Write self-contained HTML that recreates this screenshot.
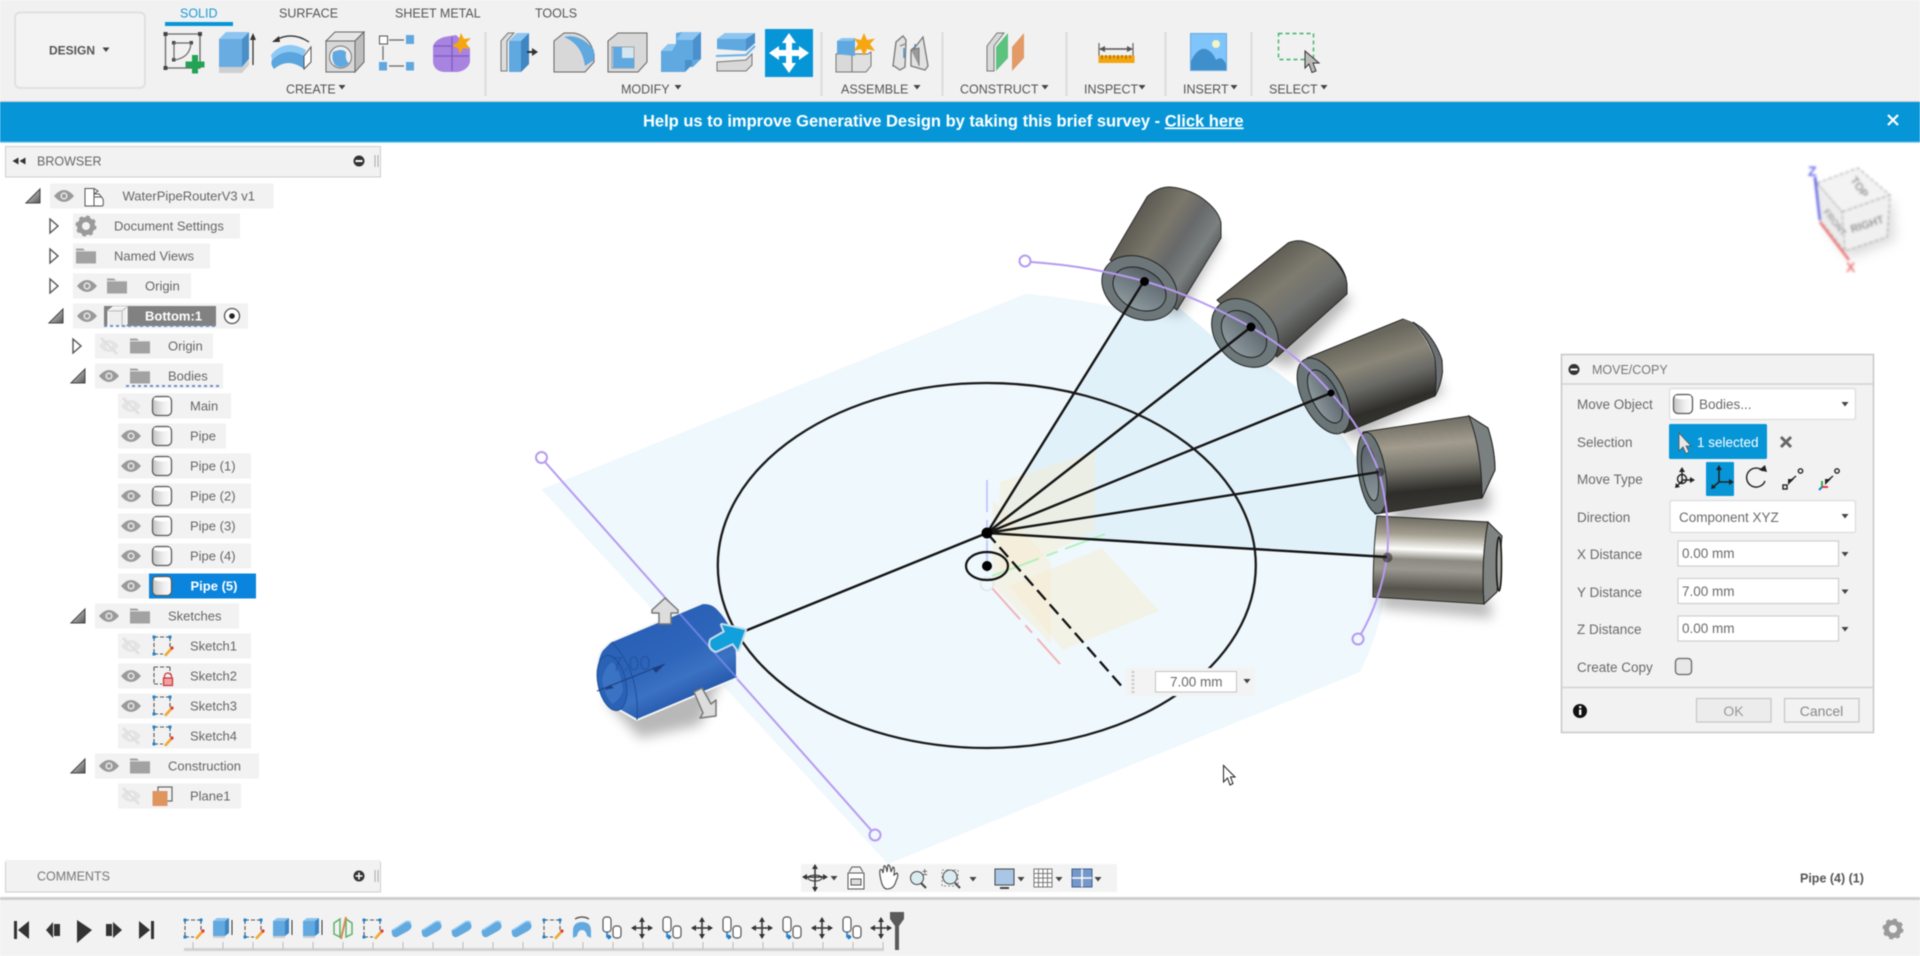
<!DOCTYPE html>
<html><head><meta charset="utf-8"><title>Move/Copy</title>
<style>
html,body{margin:0;padding:0;background:#fff;width:1920px;height:956px;overflow:hidden}
svg{display:block;position:absolute;left:0;top:0;filter:blur(.45px)}
text{font-family:"Liberation Sans",sans-serif}
.tab{font-size:12.5px;fill:#555}
.lbl{font-size:12.5px;fill:#555}
.tr{font-size:13px;fill:#666}
.d{font-size:13.5px;fill:#6a6a6a}
</style></head><body>
<svg width="1920" height="956" viewBox="0 0 1920 956" xmlns="http://www.w3.org/2000/svg">
<defs>
<filter id="bl" x="-30%" y="-30%" width="160%" height="160%"><feGaussianBlur stdDeviation="6"/></filter>
<filter id="b1" x="-10%" y="-10%" width="120%" height="120%"><feGaussianBlur stdDeviation="1"/></filter>
<linearGradient id="tri" x1="0" y1="0" x2="1" y2="1"><stop offset="0" stop-color="#eee"/><stop offset="1" stop-color="#555"/></linearGradient>
<linearGradient id="cg" x1="0" y1="0" x2="1" y2="0"><stop offset="0" stop-color="#c4c4c4"/><stop offset=".6" stop-color="#f0f0f0"/><stop offset="1" stop-color="#fff"/></linearGradient>
<linearGradient id="c1" gradientUnits="userSpaceOnUse" x1="1108" y1="258" x2="1178" y2="305"><stop offset="0" stop-color="#5d5b53"/><stop offset=".35" stop-color="#7b776b"/><stop offset=".6" stop-color="#67696a"/><stop offset=".85" stop-color="#7b8080"/><stop offset="1" stop-color="#5d6060"/></linearGradient>
<linearGradient id="c2" gradientUnits="userSpaceOnUse" x1="1225" y1="290" x2="1280" y2="360"><stop offset="0" stop-color="#5e5c54"/><stop offset=".35" stop-color="#7e7b6f"/><stop offset=".65" stop-color="#6f7170"/><stop offset=".9" stop-color="#4a4b48"/><stop offset="1" stop-color="#3e3e3a"/></linearGradient>
<linearGradient id="c3" gradientUnits="userSpaceOnUse" x1="1360" y1="340" x2="1385" y2="420"><stop offset="0" stop-color="#6a685e"/><stop offset=".3" stop-color="#8a8678"/><stop offset=".55" stop-color="#6a6a66"/><stop offset=".85" stop-color="#2f2e2a"/><stop offset="1" stop-color="#353530"/></linearGradient>
<linearGradient id="c4" gradientUnits="userSpaceOnUse" x1="1420" y1="420" x2="1428" y2="510"><stop offset="0" stop-color="#6e6c62"/><stop offset=".28" stop-color="#a29c8e"/><stop offset=".5" stop-color="#7d7b72"/><stop offset=".78" stop-color="#2e2d29"/><stop offset="1" stop-color="#3a3934"/></linearGradient>
<linearGradient id="c5" gradientUnits="userSpaceOnUse" x1="1430" y1="518" x2="1427" y2="602"><stop offset="0" stop-color="#6e6c61"/><stop offset=".2" stop-color="#a39e90"/><stop offset=".38" stop-color="#fdfdfa"/><stop offset=".5" stop-color="#8c8a82"/><stop offset=".62" stop-color="#9a9890"/><stop offset=".85" stop-color="#55544c"/><stop offset="1" stop-color="#6c6b62"/></linearGradient>
<linearGradient id="hole" x1="0" y1="0" x2="0" y2="1"><stop offset="0" stop-color="#59626a"/><stop offset="1" stop-color="#8b989c"/></linearGradient>
<linearGradient id="blc" gradientUnits="userSpaceOnUse" x1="640" y1="620" x2="680" y2="705"><stop offset="0" stop-color="#2960b6"/><stop offset=".5" stop-color="#2e66bb"/><stop offset=".75" stop-color="#3c72c2"/><stop offset="1" stop-color="#2458ac"/></linearGradient>
<g id="eye"><path d="M-10 0Q0-12 10 0Q0 12-10 0Z" fill="#9a9a9a"/><circle r="3.6" fill="#e8e8e8"/><circle r="2.1" fill="#9a9a9a"/></g>
<g id="eyeoff"><path d="M-10 0Q0-12 10 0Q0 12-10 0Z" fill="#e4e4e4"/><circle r="3" fill="#f6f6f6"/><path d="M-8-8L8 8" stroke="#e0e0e0" stroke-width="2.5"/></g>
<g id="fold"><path d="M-10-7.5h7l2 2h11v13h-20z" fill="#a2a2a2"/><path d="M-10-5h20" stroke="#e4e4e4" stroke-width="1"/></g>
<g id="td"><path d="M-7 7L7-7V7Z" fill="url(#tri)" stroke="#444" stroke-width="1"/></g>
<g id="tr"><path d="M-4-7L4 0L-4 7Z" fill="#fff" stroke="#555" stroke-width="1.4"/></g>
<g id="cyl"><rect x="-9.500" y="-9.500" width="19" height="19" rx="4.500" fill="url(#cg)" stroke="#5a5a5a" stroke-width="1.3"/><path d="M-8-6Q0-3 8-6V-8.500H-8Z" fill="#fff"/></g>
<g id="sk"><path d="M-8-9H8M-8-9V8M8-9V5M-8 8H1" fill="none" stroke="#555" stroke-width="1.1" stroke-dasharray="4 2"/><g fill="#1c86d8"><rect x="-9.500" y="-10.500" width="3" height="3"/><rect x="6.500" y="-10.500" width="3" height="3"/><rect x="-9.500" y="6.500" width="3" height="3"/></g><path d="M2 9L9 1L11 3L4 10.500Z" fill="#f0a830"/><circle cx="10" cy="2" r="1.600" fill="#e53935"/></g>
<g id="skl"><path d="M-8-9H8M-8-9V8M8-9V-1M-8 8H0" fill="none" stroke="#555" stroke-width="1.1" stroke-dasharray="4 2"/><path d="M2.500 1.500V0a3.500 3 0 0 1 7 0v1.500" fill="none" stroke="#c8323a" stroke-width="1.2"/><rect x="1.500" y="2" width="9" height="7.500" fill="#f0a0a0" stroke="#c8323a" stroke-width="1.2"/></g>
<g id="gear"><circle r="6.500" fill="none" stroke="#9a9a9a" stroke-width="5"/><circle r="9" fill="none" stroke="#9a9a9a" stroke-width="3" stroke-dasharray="3.530 3.530"/></g>
<path id="car" d="M-3.500-2h7L0 2.500Z" fill="#444"/>
<g id="tE"><path d="M-9-7H3V8H-9Z" fill="#62a9e0"/><path d="M3-7L7-10H-5L-9-7Z" fill="#8cc4ee"/><path d="M3-7L7-10V5L3 8Z" fill="#3f86c2"/><path d="M-9 8H3V10H-9Z" fill="#cfcfcf"/><path d="M10 7V-8" stroke="#333" stroke-width="1"/></g>
<g id="tL"><path d="M-9 1L3-6Q7-8 9-4T6 3L-5 9Q-9 10-10 6T-9 1Z" fill="#62a9e0"/><path d="M-9 2L3-6Q7-8 9-5" fill="none" stroke="#9bd0f5" stroke-width="1.500"/></g>
<g id="tP"><path d="M-9-5L-3-9V9L-9 6Z" fill="none" stroke="#5ab26c" stroke-width="1.500"/><path d="M3-9L9-5V6L3 9Z" fill="none" stroke="#5ab26c" stroke-width="1.500"/><path d="M-2 11L3-11" stroke="#d88a50" stroke-width="2"/></g>
<g id="tR"><path d="M-9 3Q-9-6 0-6T9 3V10L5 8Q4 2 0 2T-5 8L-9 10Z" fill="#62a9e0"/><path d="M-7-9Q0-13 7-9" fill="none" stroke="#444" stroke-width="1.2"/></g>
<g id="tC"><rect x="-9" y="-11" width="8" height="15" rx="3" fill="#fff" stroke="#555" stroke-width="1.2"/><rect x="1" y="-2" width="8" height="12" rx="3" fill="#fff" stroke="#555" stroke-width="1.2"/><path d="M-5 4V9H-1M-1 9L-4 7M-1 9L-4 11" fill="none" stroke="#1a78c8" stroke-width="1.500"/></g>
<g id="tM"><path d="M0-10V10M-10 0H10" stroke="#333" stroke-width="1.600"/><path d="M0-11L-3-6H3ZM0 11L-3 6H3ZM-11 0L-6-3V3ZM11 0L6-3V3Z" fill="#333"/></g>
</defs>

<!-- ===== VIEWPORT ===== -->
<rect width="1920" height="956" fill="#fff"/>
<path d="M541.500 489.500L1025 294C1100 300 1160 316 1210 337C1265 362 1310 393 1340 433C1372 478 1387 525 1387 566C1386 605 1376 640 1360 672L888 864Z" fill="#eff8fd"/>
<path d="M987 533L1145 283C1170 298 1195 322 1215 338C1270 362 1310 393 1340 433C1368 470 1384 515 1387 558Z" fill="#e1f1fa"/>
<!-- planes -->
<g fill="#f7e9c9" fill-opacity=".42">
<path d="M1000 482L1095 451V531L1000 577Z"/><path d="M993 500L1051 562V644L993 585Z"/><path d="M1009 586L1102 548L1159 611L1063 650Z"/>
</g>
<!-- axes -->
<path d="M987 480V575" stroke="#c9c9fb" stroke-width="2" stroke-dasharray="32 8 12 8"/>
<path d="M992 576L1105 534" stroke="#b4efbc" stroke-width="2" stroke-dasharray="50 8 12 8 80"/>
<path d="M992 588L1060 664" stroke="#f2b4b4" stroke-width="2" stroke-dasharray="42 8 10 8 40"/>
<circle cx="987" cy="584" r="6.500" fill="none" stroke="#e4e4e4" stroke-width="1.500"/>
<ellipse cx="986.800" cy="565.500" rx="269" ry="182.500" fill="none" stroke="#1a1a1a" stroke-width="2.300"/>
<ellipse cx="987" cy="566" rx="21" ry="14" fill="none" stroke="#111" stroke-width="2.200"/>
<circle cx="987" cy="566" r="5" fill="#000"/>
<path d="M987 533L1125 690" stroke="#111" stroke-width="2.300" stroke-dasharray="13 6"/>

<!-- shadows -->
<g fill="#000" fill-opacity=".28" filter="url(#bl)">
<path d="M1175 220L1222 240L1180 316L1130 300Z"/>
<path d="M1300 262L1352 300L1290 368L1240 350Z"/>
<path d="M1420 350L1444 392L1352 442L1335 410Z"/>
<path d="M1400 500L1490 486L1490 510L1385 526Z"/>
<path d="M1380 590L1490 600L1492 618L1380 608Z"/>
<path d="M605 700L730 660L700 725L640 738Z"/>
</g>

<!-- cylinder 1 -->
<path d="M1110 260L1147 197Q1157 187 1170 187Q1192 189 1207 202Q1219 212 1221 223L1221 238L1177 310Z" fill="url(#c1)" stroke="#2a2a28" stroke-width="1"/>
<ellipse cx="1139.500" cy="288" rx="39.500" ry="30" transform="rotate(28 1139.500 288)" fill="#6d7779" stroke="#222" stroke-width="1"/>
<ellipse cx="1139.500" cy="289" rx="28" ry="20" transform="rotate(28 1139.500 289)" fill="url(#hole)" stroke="#222" stroke-width="1"/>
<!-- cylinder 2 -->
<path d="M1217 300L1288 243Q1295 240 1302 241Q1318 245 1331 256Q1345 268 1347 284L1347 294L1277 357Z" fill="url(#c2)" stroke="#2a2a28" stroke-width="1"/>
<path d="M1322 249Q1340 260 1346 278Q1336 258 1322 249Z" fill="#333" stroke="#222" stroke-width="1"/>
<ellipse cx="1245" cy="333" rx="38" ry="29" transform="rotate(48 1245 333)" fill="#6d787b" stroke="#222" stroke-width="1"/>
<ellipse cx="1244" cy="334" rx="26.500" ry="19" transform="rotate(48 1244 334)" fill="url(#hole)" stroke="#222" stroke-width="1"/>
<!-- cylinder 3 -->
<path d="M1307 358L1403 319L1413 323L1435 396L1344 433Z" fill="url(#c3)" stroke="#2a2a28" stroke-width="1"/>
<path d="M1403 319L1413 323Q1433 345 1437 372Q1437 385 1435 396Z" fill="url(#c3)"/>
<path d="M1413 322Q1430 340 1435 360Q1437 380 1435 396Q1441 385 1442.500 372L1442 360Q1436 341 1422 328Z" fill="#6d7072" stroke="#222" stroke-width="1"/>
<ellipse cx="1323.500" cy="396" rx="41" ry="21" transform="rotate(63 1323.500 396)" fill="#6a7578" stroke="#222" stroke-width="1"/>
<ellipse cx="1325" cy="396.500" rx="29" ry="13" transform="rotate(63 1325 396.500)" fill="url(#hole)" stroke="#222" stroke-width="1"/>
<!-- cylinder 4 -->
<path d="M1363 432L1469 416L1488 428Q1495 450 1495 470L1482 498L1375 514Q1362 490 1359 470Q1359 445 1363 432Z" fill="url(#c4)" stroke="#2a2a28" stroke-width="1"/>
<path d="M1469 416Q1482 450 1482 498L1495 470Q1495 450 1488 428Z" fill="#7a7f7f" stroke="#222" stroke-width="1"/>
<ellipse cx="1372" cy="473" rx="13.500" ry="41" transform="rotate(-9 1372 473)" fill="#6b7577" stroke="#222" stroke-width="1"/>
<ellipse cx="1370" cy="473" rx="7.500" ry="28" transform="rotate(-9 1370 473)" fill="url(#hole)" stroke="#222" stroke-width="1"/>
<!-- cylinder 5 -->
<path d="M1377 516L1488 522Q1481 560 1484 604L1373 597Q1373 550 1377 516Z" fill="url(#c5)" stroke="#2a2a28" stroke-width="1"/>
<path d="M1488 522L1502 536L1497 592L1484 604Q1481 560 1488 522Z" fill="#7f8382" stroke="#222" stroke-width="1"/>
<ellipse cx="1499" cy="564" rx="2.500" ry="27" fill="#a8a8a2" stroke="#1a1a1a" stroke-width="1.600"/>

<!-- purple -->
<g fill="none" stroke="#b79af0" stroke-width="2">
<path d="M1031 262C1075 265 1110 272 1144 281C1185 293 1220 310 1251 327C1285 347 1310 368 1331 393C1355 420 1370 447 1379 472C1386 497 1390 530 1387 557C1382 590 1372 615 1361 634"/>
<circle cx="1025" cy="261" r="5.500"/><circle cx="1358" cy="639" r="5.500"/>
<path d="M545 462L871 830"/>
<circle cx="541.500" cy="457.500" r="5.500"/><circle cx="875" cy="835" r="5.500"/>
</g>
<!-- black lines -->
<g stroke="#151515" stroke-width="2.400">
<path d="M987 533L1144 281M987 533L1251 327M987 533L1331 393M987 533L1379 472M987 533L1387 557M987 533L745 631"/>
</g>
<circle cx="1144.500" cy="281.500" r="4.500" fill="#000"/><circle cx="1251" cy="327" r="4.500" fill="#000"/><circle cx="1331" cy="393" r="3.500" fill="#000"/>
<circle cx="1380" cy="472" r="4.500" fill="#222" fill-opacity=".55"/><circle cx="1387.500" cy="557.500" r="5" fill="#222" fill-opacity=".55"/>
<circle cx="987" cy="533" r="5.500" fill="#000"/>

<!-- blue selected cylinder -->
<path d="M610 642L703 603Q712 603 717 608Q727 618 732 630Q737 645 737 657V678L637 720L623 712Q608 704 602 693Q596 682 597 670Q597 658 602 650Z" fill="url(#blc)" stroke="#f4f4f4" stroke-width="2"/>
<path d="M612 642Q640 672 637 720" fill="none" stroke="#1f4f98" stroke-width="1"/>
<ellipse cx="612" cy="683" rx="14" ry="28" transform="rotate(-12 612 683)" fill="#2a62b6" stroke="#1f4f98" stroke-width="1"/>
<path d="M602 680Q604 668 612 662Q620 668 623 690Q620 700 612 704Q604 694 602 680Z" fill="#3a72c4"/>
<path d="M597 691L665 664" stroke="#1d3f80" stroke-width="1"/>
<path d="M652 668L665 664L656 673ZM610 685L604 690L614 688Z" fill="#1d3f80"/>
<text x="612" y="671" font-size="20" fill="#1c3f80" fill-opacity=".35" transform="rotate(-2 612 671)">7.00</text>
<path d="M680 614L737 678" stroke="#7d8cf0" stroke-width="2" opacity=".75"/>
<!-- arrows -->
<path d="M665 598L678 610V613H671V624H659V613H652V610Z" fill="#ddd" stroke="#777" stroke-width="1.500" stroke-linejoin="round"/>
<path d="M694 692L702 688L711 704L716 700V716L700 718L703 713Z" fill="#ddd" stroke="#777" stroke-width="1.500" stroke-linejoin="round"/>
<path d="M711 640L725 632L722 625L745 630L738 650L733 643L716 651Q708 648 711 640Z" fill="#12a0dc" stroke="#c9dce8" stroke-width="4" paint-order="stroke" stroke-linejoin="round"/>

<!-- dimension widget -->
<rect x="1125" y="668" width="130" height="28" fill="#f3f3f3"/>
<path d="M1133 671V694" stroke="#ccc" stroke-width="3" stroke-dasharray="2 2"/>
<rect x="1155.500" y="671.500" width="81" height="20.500" fill="#fff" stroke="#c4c4c4"/>
<text x="1170" y="686.500" class="d">7.00 mm</text>
<use href="#car" x="1247" y="681"/>
<!-- mouse cursor -->
<path d="M1223.500 765.500V782L1227.500 778L1230 785L1233 783.500L1230.500 777H1235Z" fill="#fff" stroke="#222" stroke-width="1"/>

<!-- ViewCube -->
<path d="M1825 225L1850 258L1895 240L1892 200Z" fill="#000" fill-opacity=".14" filter="url(#bl)"/>
<g filter="url(#b1)">
<path d="M1817 183L1858 168L1890 195L1842 212Z" fill="#f3f3f3" stroke="#999" stroke-dasharray="4 2"/>
<path d="M1842 212L1890 195L1887 237L1845 251Z" fill="#f0f0f0" stroke="#999" stroke-dasharray="4 2"/>
<path d="M1817 183L1842 212L1845 251L1820 220Z" fill="#ececec" stroke="#aaa" stroke-dasharray="4 2"/>
<text x="0" y="0" font-size="11" font-weight="bold" fill="#888" transform="translate(1850 180) rotate(55)">TOP</text>
<text x="0" y="0" font-size="11" font-weight="bold" fill="#888" transform="translate(1852 233) rotate(-18)">RIGHT</text>
<text x="0" y="0" font-size="9" font-weight="bold" fill="#999" transform="translate(1823 212) rotate(52)">FRONT</text>
<path d="M1815 177L1820 220" stroke="#5a5ae6" stroke-width="2.500"/>
<path d="M1820 222L1849 260" stroke="#ee7070" stroke-width="2.500"/>
<text x="1808" y="176" font-size="14" font-weight="bold" fill="#6a6af0">Z</text>
<text x="1846" y="272" font-size="14" font-weight="bold" fill="#f07878">X</text>
</g>

<!-- ===== TOOLBAR ===== -->
<rect width="1920" height="101" fill="#f1f1f1"/>
<rect y="101" width="1920" height="1" fill="#cfcfcf"/>
<rect y="102" width="1920" height="39.500" fill="#0696d7"/>
<rect y="141.500" width="1920" height="1.200" fill="#62bfe8"/>
<text x="643" y="126.500" font-size="16.500" font-weight="bold" fill="#fff">Help us to improve Generative Design by taking this brief survey - <tspan text-decoration="underline">Click here</tspan></text>
<path d="M1888 115L1898 125M1898 115L1888 125" stroke="#fff" stroke-width="2.200"/>

<rect x="15" y="12.500" width="130" height="75.500" rx="5" fill="#f3f3f3" stroke="#e0e0e0" stroke-width="2"/>
<text x="49" y="54.500" font-size="12" font-weight="bold" fill="#555">DESIGN</text>
<use href="#car" x="106" y="49.500"/>
<text x="180" y="17.500" class="tab" style="fill:#1a9ad8">SOLID</text>
<rect x="165" y="22" width="68" height="4" fill="#0696d7"/>
<text x="279" y="17.500" class="tab">SURFACE</text>
<text x="395" y="17.500" class="tab">SHEET METAL</text>
<text x="535" y="17.500" class="tab">TOOLS</text>

<!-- separators -->
<g fill="#dcdcdc"><rect x="484.500" y="32" width="2" height="64"/><rect x="820.500" y="32" width="2" height="64"/><rect x="941.500" y="32" width="2" height="64"/><rect x="1065.500" y="32" width="2" height="64"/><rect x="1164.500" y="32" width="2" height="64"/><rect x="1250.500" y="32" width="2" height="64"/></g>

<!-- labels -->
<text x="286" y="93.500" class="lbl">CREATE</text><use href="#car" x="342" y="87"/>
<text x="621" y="93.500" class="lbl">MODIFY</text><use href="#car" x="678" y="87"/>
<text x="841" y="93.500" class="lbl">ASSEMBLE</text><use href="#car" x="917" y="87"/>
<text x="960" y="93.500" class="lbl">CONSTRUCT</text><use href="#car" x="1045" y="87"/>
<text x="1084" y="93.500" class="lbl">INSPECT</text><use href="#car" x="1142" y="87"/>
<text x="1183" y="93.500" class="lbl">INSERT</text><use href="#car" x="1234" y="87"/>
<text x="1269" y="93.500" class="lbl">SELECT</text><use href="#car" x="1324" y="87"/>

<!-- sketch -->
<path d="M165.500 34H200V68H165.500Z" fill="none" stroke="#666" stroke-width="1.300"/>
<g fill="#444"><rect x="163.500" y="32" width="4" height="4"/><rect x="198" y="32" width="4" height="4"/><rect x="163.500" y="66" width="4" height="4"/><rect x="172" y="41" width="3.500" height="3.500"/><rect x="189.500" y="41" width="3.500" height="3.500"/><rect x="172" y="58" width="3.500" height="3.500"/></g>
<path d="M174 43V60M174 43H191M191 43Q190 58 174 60" fill="none" stroke="#666" stroke-width="1.200"/>
<path d="M192 55h6v6.500h6.500v6h-6.500v6h-6v-6h-6.500v-6h6.500z" fill="#23a455"/>
<!-- extrude -->
<path d="M219 67h23l7-7v5l-7 8h-23z" fill="#cfcfcf"/><path d="M219 39H242V67H219Z" fill="#69ace2"/><path d="M242 39L249 32V59L242 67Z" fill="#4a8fc8"/><path d="M219 39L226 32H249L242 39Z" fill="#8cc5ef"/>
<path d="M253 65V37" stroke="#333" stroke-width="1.300"/><path d="M253 33L250 40H256Z" fill="#333"/>
<!-- revolve -->
<path d="M271 55Q285 38 306 50L304 56Q286 46 272 60Z" fill="#8cc9f5"/>
<path d="M272 60Q286 46 304 56V69Q288 57 274 69Q270 64 272 60Z" fill="#5aa5de"/>
<path d="M304 56L311 47V62L304 69Z" fill="#fff" stroke="#555"/>
<path d="M276 40Q292 31 309 42" fill="none" stroke="#333" stroke-width="1.300"/><path d="M272 42L279 36L280 42Z" fill="#333"/>
<!-- hole -->
<path d="M326 41H355V72H326Z" fill="#d8d8d8" stroke="#666"/><path d="M326 41L335 32H364L355 41Z" fill="#e6e6e6" stroke="#666"/><path d="M355 41L364 32V62L355 72Z" fill="#bdbdbd" stroke="#666"/>
<circle cx="340.500" cy="57" r="11" fill="#eee" stroke="#777"/><path d="M333 52Q342 48 346 52Q345 61 349 63Q342 70 335 65Q331 59 333 52Z" fill="#5fa8e0"/>
<!-- pattern -->
<rect x="379.500" y="36" width="8" height="8" fill="#fff" stroke="#555"/><rect x="406" y="35" width="8" height="9" fill="#5fa8e0"/><rect x="379" y="62" width="8" height="8.500" fill="#5fa8e0"/><rect x="406" y="62" width="8" height="8.500" fill="#5fa8e0"/>
<path d="M389 40H404M383 46V60M389 66H404" stroke="#666" stroke-width="1.200"/>
<!-- form -->
<path d="M433 46Q435 40 444 37L456 35L470 48V62Q468 70 458 72H444Q434 71 433 62Z" fill="#a884e0"/><path d="M434 56H469M452 37V71M434 46H462" stroke="#7f58c2" stroke-width="1.200"/>
<path d="M461 33L464 39L471 38L466 43L470 49L463 48L460 54L458 48L452 46L458 42Z" fill="#f6a60f"/>

<!-- press pull -->
<path d="M501 71V41L508 33H514L507 41V71Z" fill="#ddd" stroke="#777"/><path d="M509 72V41L517 33H529V64L521 72Z" fill="#5fa8e0"/><path d="M521 41V72L529 64V33Z" fill="#3f86c2"/><path d="M509 41L517 33H529L521 41Z" fill="#8cc5ef"/><path d="M527 52H534" stroke="#333" stroke-width="2"/><path d="M538 52L532 48V56Z" fill="#333"/>
<!-- fillet -->
<path d="M554 72V41L564 33H574Q590 36 594 54L594 62L585 72Z" fill="#d8d8d8" stroke="#666"/><path d="M564 37Q580 33 594 50L594 60L585 66Q582 44 564 37Z" fill="#5fa8e0"/>
<!-- shell -->
<path d="M608 72V41L618 33H647V62L638 72Z" fill="#d8d8d8" stroke="#666"/><path d="M612 47H634V68H612Z" fill="#eee" stroke="#999"/><path d="M613 47H622V58H634V68H613Z" fill="#5fa8e0"/><path d="M622 47H634V58H622Z" fill="#a9d6f6" fill-opacity=".4"/>
<!-- combine -->
<path d="M661 51L668 44H676V33L682 32H701V59L693 67H685V72H661Z" fill="#5fa8e0"/><path d="M676 40L682 32H701L693 40Z" fill="#8cc5ef"/><path d="M693 40L701 32V59L693 60Z" fill="#4a90cc"/><path d="M685 60V72L692 65V60Z" fill="#4a90cc"/><path d="M661 51L668 44H676L672 51Z" fill="#8cc5ef"/>
<!-- offset -->
<path d="M717 49V39L725 33H755V43L746 51Z" fill="#5fa8e0"/><path d="M717 39L725 33H755L746 39Z" fill="#8cc5ef"/><path d="M746 39L755 33V43L746 51Z" fill="#4a90cc"/>
<path d="M716 56L746 55L755 46" fill="none" stroke="#6db2e8" stroke-width="2"/>
<path d="M717 62L746 60L752 54V65L746 71H717Z" fill="#d8d8d8" stroke="#777"/>
<!-- move tile -->
<rect x="765" y="29" width="48" height="48" fill="#0696d7"/>
<path d="M789 33L796 43H792V50H799V46L809 53L799 60V56H792V63H796L789 73L782 63H786V56H779V60L769 53L779 46V50H786V43H782Z" fill="#fff"/>

<!-- assemble -->
<path d="M836 72V54H852V72Z" fill="#d9d9d9" stroke="#777"/><path d="M852 72V54H868L871 52V66L866 72Z" fill="#e0e0e0" stroke="#777"/>
<path d="M837 54V41L842 38H855V56Z" fill="#5fa8e0"/><path d="M837 41L842 38H856L852 41Z" fill="#8cc5ef"/>
<path d="M864 33L867 40L875 38.500L870 44L875 51L867 49L864 56L861 49L854 51L858 44L854 38.500L861 40Z" fill="#f6a60f"/>
<path d="M893 66L896 42L903 36L906 40L905 67L900 70L894 66ZM916 46L923 37L928 66L925 70L918 68L911 66V50Z" fill="#e2e2e2" stroke="#777" stroke-width="1.300"/><path d="M900 46L905 44" stroke="#777"/><path d="M904 48V58M915 44V52" stroke="#3f86c2" stroke-width="1.300"/><path d="M911 50L919 48V66" fill="#9a9a9a" stroke="#777"/>
<!-- construct -->
<path d="M987 71V46L997 33H1004L994 46V71Z" fill="#d9d9d9" stroke="#777"/><path d="M996 71V47L1008 33V58Z" fill="#5cc27e"/><path d="M1012 71V47L1024 33V58Z" fill="#e29a66"/>
<!-- inspect -->
<path d="M1099 43V56M1133 43V56" stroke="#666" stroke-width="1.200"/><path d="M1100 49H1132" stroke="#555" stroke-width="1.400"/><path d="M1099 49L1105 46V52ZM1133 49L1127 46V52Z" fill="#555"/>
<rect x="1098.500" y="55.500" width="36" height="7.500" fill="#f4a40c"/><path d="M1102 55V59M1106 55V58M1110 55V59M1114 55V58M1118 55V59M1122 55V58M1126 55V59M1130 55V58" stroke="#8a6416"/>
<!-- insert -->
<rect x="1190.500" y="33.500" width="36" height="37" fill="#7fc4fa" stroke="#6aaae0"/><circle cx="1216" cy="44" r="4" fill="#f4f4c4"/><path d="M1191 61Q1198 47 1206 49Q1213 52 1216 60Q1222 55 1226 64V70H1191Z" fill="#3f8fcc"/>
<!-- select -->
<rect x="1278.500" y="33.500" width="35" height="26" fill="none" stroke="#3cb567" stroke-width="1.400" stroke-dasharray="4 3"/>
<path d="M1305 51V68L1309 64L1312 72.500L1316 71L1313 63H1319Z" fill="#bbb" stroke="#333"/>

<!-- ===== BROWSER ===== -->
<rect x="5.500" y="146.500" width="375" height="30.500" fill="#f2f2f2" stroke="#cfcfcf"/>
<path d="M18.500 157.500L12.500 161L18.500 164.500ZM25.500 157.500L19.500 161L25.500 164.500Z" fill="#333"/>
<text x="37" y="165.500" font-size="12.500" fill="#666">BROWSER</text>
<circle cx="359" cy="161" r="5.500" fill="#333"/><rect x="355.500" y="160" width="7" height="2" fill="#fff"/>
<path d="M375 155V167M378 155V167" stroke="#aaa"/>

<g fill="#f2f2f2">
<rect x="50" y="183.500" width="223.500" height="25"/><rect x="73" y="213.500" width="167" height="25"/><rect x="73" y="243.500" width="137" height="25"/><rect x="73" y="273.500" width="118" height="25"/><rect x="73" y="303.500" width="175" height="25"/><rect x="95" y="333.500" width="118" height="25"/><rect x="95" y="363.500" width="128" height="25"/>
<rect x="118" y="393.500" width="113" height="25"/><rect x="118" y="423.500" width="108" height="25"/><rect x="118" y="453.500" width="133" height="25"/><rect x="118" y="483.500" width="133" height="25"/><rect x="118" y="513.500" width="133" height="25"/><rect x="118" y="543.500" width="133" height="25"/><rect x="118" y="573.500" width="138" height="25"/>
<rect x="95" y="603.500" width="144" height="25"/><rect x="118" y="633.500" width="133" height="25"/><rect x="118" y="663.500" width="133" height="25"/><rect x="118" y="693.500" width="133" height="25"/><rect x="118" y="723.500" width="133" height="25"/><rect x="95" y="753.500" width="164" height="25"/><rect x="118" y="783.500" width="123" height="25"/>
</g>
<rect x="104" y="306" width="112" height="20" fill="#818181"/>
<rect x="149" y="573.500" width="107" height="25" fill="#0a84dc"/>

<use href="#td" x="33" y="196"/><use href="#tr" x="54" y="226"/><use href="#tr" x="54" y="256"/><use href="#tr" x="54" y="286"/><use href="#td" x="56" y="316"/><use href="#tr" x="77" y="346"/><use href="#td" x="78" y="376"/><use href="#td" x="78" y="616"/><use href="#td" x="78" y="766"/>

<use href="#eye" x="64" y="196"/><use href="#eye" x="87" y="286"/><use href="#eye" x="87" y="316"/><use href="#eyeoff" x="109" y="346"/><use href="#eye" x="109" y="376"/><use href="#eyeoff" x="131" y="406"/>
<use href="#eye" x="131" y="436"/><use href="#eye" x="131" y="466"/><use href="#eye" x="131" y="496"/><use href="#eye" x="131" y="526"/><use href="#eye" x="131" y="556"/><use href="#eye" x="131" y="586"/><use href="#eye" x="109" y="616"/>
<use href="#eyeoff" x="131" y="646"/><use href="#eye" x="131" y="676"/><use href="#eye" x="131" y="706"/><use href="#eyeoff" x="131" y="736"/><use href="#eye" x="109" y="766"/><use href="#eyeoff" x="131" y="796"/>

<path d="M85 188.500H94V194H99L103 199Q104 206 102 206H85Z" fill="#fff" stroke="#555"/><path d="M94 188.500V206M94 197H102" stroke="#555" fill="none"/><path d="M94 188.500L98 191L94 194" fill="none" stroke="#555"/>
<use href="#gear" x="86" y="226"/><use href="#fold" x="86" y="256"/><use href="#fold" x="117" y="286"/><use href="#fold" x="140" y="346"/><use href="#fold" x="140" y="376"/>
<path d="M108 311L113 307H127V324L123 327H108Z" fill="#eeeeee" stroke="#fff" stroke-width="1.200"/><path d="M108 311H122L127 307M122 311V327" fill="none" stroke="#bbb"/>
<use href="#cyl" x="162" y="406"/><use href="#cyl" x="162" y="436"/><use href="#cyl" x="162" y="466"/><use href="#cyl" x="162" y="496"/><use href="#cyl" x="162" y="526"/><use href="#cyl" x="162" y="556"/><use href="#cyl" x="162" y="586"/>
<use href="#fold" x="140" y="616"/><use href="#sk" x="162" y="646"/><use href="#skl" x="162" y="676"/><use href="#sk" x="162" y="706"/><use href="#sk" x="162" y="736"/><use href="#fold" x="140" y="766"/>
<rect x="158" y="787" width="14" height="14" fill="none" stroke="#666" stroke-width="1.200"/><rect x="152.500" y="791" width="15" height="15" fill="#df9560"/>
<circle cx="232" cy="316" r="7.500" fill="#fff" stroke="#555" stroke-width="1.300"/><circle cx="232" cy="316" r="2.800" fill="#222"/>

<text x="122.500" y="200.500" class="tr">WaterPipeRouterV3 v1</text>
<text x="114" y="230.500" class="tr">Document Settings</text>
<text x="114" y="260.500" class="tr">Named Views</text>
<text x="145" y="290.500" class="tr">Origin</text>
<text x="145" y="320.500" class="tr" style="fill:#fff;font-weight:bold">Bottom:1</text>
<text x="168" y="350.500" class="tr">Origin</text>
<text x="168" y="380.500" class="tr">Bodies</text>
<text x="190" y="410.500" class="tr">Main</text>
<text x="190" y="440.500" class="tr">Pipe</text>
<text x="190" y="470.500" class="tr">Pipe (1)</text>
<text x="190" y="500.500" class="tr">Pipe (2)</text>
<text x="190" y="530.500" class="tr">Pipe (3)</text>
<text x="190" y="560.500" class="tr">Pipe (4)</text>
<text x="190.500" y="590.500" class="tr" style="fill:#fff;font-weight:bold">Pipe (5)</text>
<text x="168" y="620.500" class="tr">Sketches</text>
<text x="190" y="650.500" class="tr">Sketch1</text>
<text x="190" y="680.500" class="tr">Sketch2</text>
<text x="190" y="710.500" class="tr">Sketch3</text>
<text x="190" y="740.500" class="tr">Sketch4</text>
<text x="168" y="770.500" class="tr">Construction</text>
<text x="190" y="800.500" class="tr">Plane1</text>
<path d="M104 326H216" stroke="#6e8fc8" stroke-width="2" stroke-dasharray="3 3"/>
<path d="M126 386H222" stroke="#6e8fc8" stroke-width="2" stroke-dasharray="3 3"/>

<!-- comments -->
<rect x="5.500" y="861" width="375" height="31" fill="#f2f2f2" stroke="#cfcfcf"/>
<rect x="5" y="860" width="376" height="2" fill="#f2f2f2"/>
<text x="37" y="880.500" font-size="12.500" fill="#777">COMMENTS</text>
<circle cx="359" cy="876" r="5.500" fill="#333"/><path d="M355.500 876H362.500M359 872.500V879.500" stroke="#fff" stroke-width="1.500"/>
<path d="M375 870V882M378 870V882" stroke="#aaa"/>

<!-- viewport toolbar -->
<rect x="801" y="864" width="316" height="28" fill="#f3f3f3"/>
<path d="M815 866V890M804 877H826" stroke="#333" stroke-width="1.500"/><path d="M815 864L812 869H818ZM815 892L812 887H818ZM802 877L807 874V880ZM828 877L823 874V880Z" fill="#333"/><ellipse cx="815" cy="878" rx="7" ry="3" fill="none" stroke="#333"/>
<use href="#car" x="834" y="878"/>
<rect x="848" y="873" width="16" height="16" fill="#fff" stroke="#555"/><rect x="851" y="879" width="10" height="6" fill="#ddd" stroke="#555"/><path d="M849 872L852 867H860L863 872" fill="none" stroke="#555"/>
<path d="M882 884Q879 874 880 870Q882 868 883 873L884 866Q886 865 887 872L888 865Q890 864 891 872L893 867Q895 867 894 875L897 873Q899 875 896 881Q894 889 887 889Q884 889 882 884Z" fill="#fff" stroke="#444" stroke-width="1.100"/>
<circle cx="917" cy="878" r="6.500" fill="#d8ecf2" stroke="#444"/><path d="M921 883L926 888" stroke="#444" stroke-width="2"/><text x="922" y="875" font-size="10" fill="#444">±</text>
<circle cx="950" cy="877" r="7" fill="#d8ecf2" stroke="#444"/><path d="M955 883L960 888" stroke="#444" stroke-width="2"/><rect x="942" y="870" width="16" height="16" fill="none" stroke="#888" stroke-dasharray="2 2"/>
<use href="#car" x="973" y="879"/>
<rect x="995" y="869" width="19" height="16" fill="#a9c6e6" stroke="#444"/><path d="M1000 888H1009" stroke="#444" stroke-width="2"/><use href="#car" x="1021" y="879"/>
<rect x="1034" y="869" width="18" height="18" fill="#fff" stroke="#777"/><path d="M1034 873.500H1052M1034 878H1052M1034 882.500H1052M1038.500 869V887M1043 869V887M1047.500 869V887" stroke="#777"/><use href="#car" x="1059" y="879"/>
<rect x="1072" y="869" width="20" height="18" fill="#7698c8" stroke="#3a5c90"/><path d="M1082 869V887M1072 878H1092" stroke="#fff" stroke-width="1.500"/><use href="#car" x="1098" y="879"/>

<text x="1800" y="882.500" font-size="12.500" font-weight="bold" fill="#555">Pipe (4) (1)</text>

<!-- ===== DIALOG ===== -->
<rect x="1561.500" y="354.500" width="312" height="378" fill="#f2f2f2" stroke="#c8c8c8" stroke-width="1.500"/>
<path d="M1562 384H1873M1562 687.500H1873" stroke="#d2d2d2" stroke-width="1.500"/>
<circle cx="1574" cy="369.500" r="5.500" fill="#333"/><rect x="1570.500" y="368.500" width="7" height="2" fill="#fff"/>
<text x="1592" y="374" font-size="12.500" fill="#777">MOVE/COPY</text>
<text x="1577" y="409" class="d">Move Object</text>
<text x="1577" y="447" class="d">Selection</text>
<text x="1577" y="484" class="d">Move Type</text>
<text x="1577" y="522" class="d">Direction</text>
<text x="1577" y="559" class="d">X Distance</text>
<text x="1577" y="597" class="d">Y Distance</text>
<text x="1577" y="634" class="d">Z Distance</text>
<text x="1577" y="672" class="d">Create Copy</text>
<rect x="1669.500" y="388.500" width="186" height="31" rx="2" fill="#fff" stroke="#e0e0e0" stroke-width="1.500"/>
<use href="#cyl" x="1683" y="404"/>
<text x="1699" y="409" class="d">Bodies...</text>
<use href="#car" x="1845" y="404"/>
<rect x="1669" y="424" width="98" height="35" rx="1.500" fill="#0696d7"/>
<path d="M1679 433V451L1683 447L1686 453.500L1689 452L1686 446H1691Z" fill="#e8e8e8" stroke="#555" stroke-width=".8"/>
<text x="1697" y="447" class="d" style="fill:#fff">1 selected</text>
<path d="M1781 437L1791 447M1791 437L1781 447" stroke="#666" stroke-width="3"/>
<!-- move type -->
<rect x="1706" y="462" width="28" height="34" rx="1" fill="#0696d7"/>
<g stroke="#222" stroke-width="1.400" fill="none">
<circle cx="1682" cy="479" r="4.500"/><path d="M1682 470V483M1682 480H1692M1682 481L1676 487"/>
<path d="M1719 468V482H1731M1719 482L1712 488" stroke-width="1.600"/>
<path d="M1763 471A9.500 9.500 0 1 0 1765 481"/>
<rect x="1783" y="485" width="4" height="4"/><circle cx="1800.500" cy="471" r="2.200"/><path d="M1789 482L1796 476"/>
<circle cx="1837" cy="471" r="2.200"/><path d="M1826 482L1833 476"/>
</g>
<path d="M1719 465L1716 470H1722ZM1734 482L1729 479V485ZM1711 489L1716 488L1712 484ZM1682 467L1679 472H1685ZM1695 480L1690 477V483ZM1675 488L1680 487L1676 483ZM1767 472L1759 470L1765 465ZM1788 479L1794 479L1788 485ZM1825 479L1831 479L1825 485Z" fill="#222"/>
<path d="M1822 481V487" stroke="#2faa4e" stroke-width="2"/><path d="M1822 487H1828" stroke="#e53935" stroke-width="2"/><path d="M1822 487L1819 490" stroke="#1c7ed6" stroke-width="2"/>
<rect x="1670" y="500.500" width="185.500" height="32" rx="2" fill="#fff" stroke="#e0e0e0" stroke-width="1.500"/>
<text x="1679" y="522" class="d">Component XYZ</text>
<use href="#car" x="1845" y="516"/>
<g fill="#fff" stroke="#cfcfcf" stroke-width="1.200"><rect x="1678" y="541" width="160.500" height="25"/><rect x="1678" y="578.500" width="160.500" height="25"/><rect x="1678" y="616" width="160.500" height="25"/></g>
<text x="1682" y="558" class="d">0.00 mm</text><text x="1682" y="596" class="d">7.00 mm</text><text x="1682" y="633" class="d">0.00 mm</text>
<use href="#car" x="1845" y="554"/><use href="#car" x="1845" y="591.500"/><use href="#car" x="1845" y="629"/>
<rect x="1675.500" y="658.500" width="16" height="16" rx="3.500" fill="#e8e8e8" stroke="#666" stroke-width="1.300"/>
<circle cx="1580" cy="711" r="7" fill="#111"/><rect x="1579" y="709.500" width="2.400" height="5.500" fill="#fff"/><rect x="1579" y="706" width="2.400" height="2.200" fill="#fff"/>
<rect x="1696.500" y="698.500" width="74.500" height="23.500" fill="#ececec" stroke="#c6c6c6" stroke-width="1.200"/>
<rect x="1784.500" y="698.500" width="74.500" height="23.500" fill="#f2f2f2" stroke="#c6c6c6" stroke-width="1.200"/>
<text x="1733.500" y="716" font-size="14" fill="#999" text-anchor="middle">OK</text>
<text x="1821.500" y="716" font-size="14" fill="#888" text-anchor="middle">Cancel</text>

<!-- ===== TIMELINE ===== -->
<rect y="898" width="1920" height="58" fill="#f2f2f2"/>
<rect y="897" width="1920" height="3" fill="#cfcfcf"/>
<g fill="#333">
<path d="M14 921H17V939H14ZM29 921V939L18 930Z"/>
<path d="M46 930L53 922V938ZM54 924H60V936H54Z"/>
<path d="M77 920L92 930L77 943Z"/>
<path d="M106 924H112V936H106ZM113 922L122 930L113 938Z"/>
<path d="M139 921L150 930L139 939ZM151 921H154V939H151Z"/>
</g>
<use href="#sk" x="193" y="929"/><use href="#tE" x="222" y="928"/><use href="#sk" x="253" y="929"/><use href="#tE" x="282" y="928"/><use href="#tE" x="312" y="928"/><use href="#tP" x="343" y="928"/><use href="#sk" x="372" y="929"/>
<use href="#tL" x="402" y="928"/><use href="#tL" x="432" y="928"/><use href="#tL" x="462" y="928"/><use href="#tL" x="492" y="928"/><use href="#tL" x="522" y="928"/>
<use href="#sk" x="552" y="929"/><use href="#tR" x="582" y="928"/><use href="#tC" x="612" y="928"/><use href="#tM" x="642" y="928"/><use href="#tC" x="672" y="928"/><use href="#tM" x="702" y="928"/><use href="#tC" x="732" y="928"/><use href="#tM" x="762" y="928"/><use href="#tC" x="792" y="928"/><use href="#tM" x="822" y="928"/><use href="#tC" x="852" y="928"/><use href="#tM" x="881" y="928"/>
<rect x="184" y="948" width="700" height="3" fill="#d2d2d2"/>
<path d="M193 942V949M223 942V949M253 942V949M283 942V949M313 942V949M343 942V949M373 942V949M403 942V949M433 942V949M463 942V949M493 942V949M523 942V949M553 942V949M583 942V949M613 942V949M643 942V949M673 942V949M703 942V949M733 942V949M763 942V949M793 942V949M823 942V949M853 942V949M883 942V949" stroke="#bbb"/>
<path d="M890 912H904V919L899 926V950H895V926L890 919Z" fill="#5a5a5a"/>
<use href="#gear" x="1893" y="929"/>
</svg>
</body></html>
